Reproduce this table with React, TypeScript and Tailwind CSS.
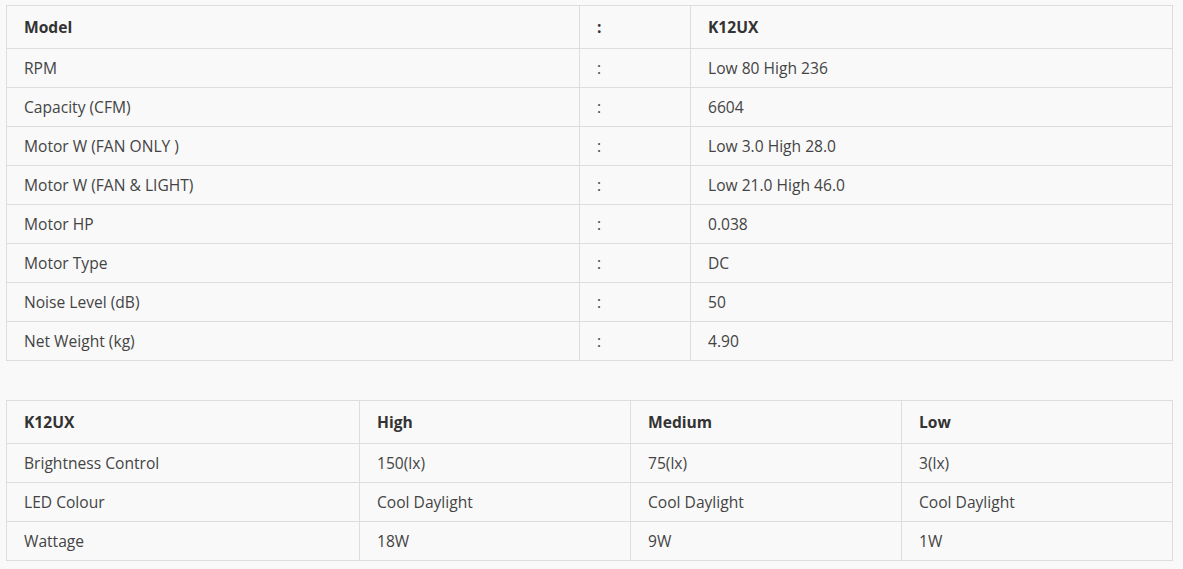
const specs = [
  ["RPM", "Low 80 High 236"],
  ["Capacity (CFM)", "6604"],
  ["Motor W (FAN ONLY )", "Low 3.0 High 28.0"],
  ["Motor W (FAN & LIGHT)", "Low 21.0 High 46.0"],
  ["Motor HP", "0.038"],
  ["Motor Type", "DC"],
  ["Noise Level (dB)", "50"],
  ["Net Weight (kg)", "4.90"],
];

const lights = [
  ["Brightness Control", "150(lx)", "75(lx)", "3(lx)"],
  ["LED Colour", "Cool Daylight", "Cool Daylight", "Cool Daylight"],
  ["Wattage", "18W", "9W", "1W"],
];

const cell = "border border-[#dddddd] px-[17px] pt-[2px] pb-0 text-left align-middle";

export default function App() {
  return (
    <div
      className="min-h-screen bg-[#f9f9f9] pt-[5px] pl-[6px] text-[15.6px] text-[#444444]"
      style={{ fontFamily: '"Open Sans", "Liberation Sans", sans-serif' }}
    >
      <table className="w-[1167px] table-fixed border-collapse">
        <colgroup>
          <col className="w-[573px]" />
          <col className="w-[111px]" />
          <col />
        </colgroup>
        <thead>
          <tr className="h-[43px]">
            <th className={`${cell} font-bold text-[#333333]`}>Model</th>
            <th className={`${cell} font-bold text-[#333333]`}>:</th>
            <th className={`${cell} font-bold text-[#333333]`}>K12UX</th>
          </tr>
        </thead>
        <tbody>
          {specs.map(([label, value]) => (
            <tr key={label} className="h-[39px]">
              <td className={cell}>{label}</td>
              <td className={cell}>:</td>
              <td className={cell}>{value}</td>
            </tr>
          ))}
        </tbody>
      </table>

      <table className="mt-[39px] w-[1167px] table-fixed border-collapse">
        <colgroup>
          <col className="w-[353px]" />
          <col className="w-[271px]" />
          <col className="w-[271px]" />
          <col />
        </colgroup>
        <thead>
          <tr className="h-[43px]">
            {["K12UX", "High", "Medium", "Low"].map((h) => (
              <th key={h} className={`${cell} font-bold text-[#333333]`}>
                {h}
              </th>
            ))}
          </tr>
        </thead>
        <tbody>
          {lights.map((row) => (
            <tr key={row[0]} className="h-[39px]">
              {row.map((v, i) => (
                <td key={i} className={cell}>
                  {v}
                </td>
              ))}
            </tr>
          ))}
        </tbody>
      </table>
    </div>
  );
}
